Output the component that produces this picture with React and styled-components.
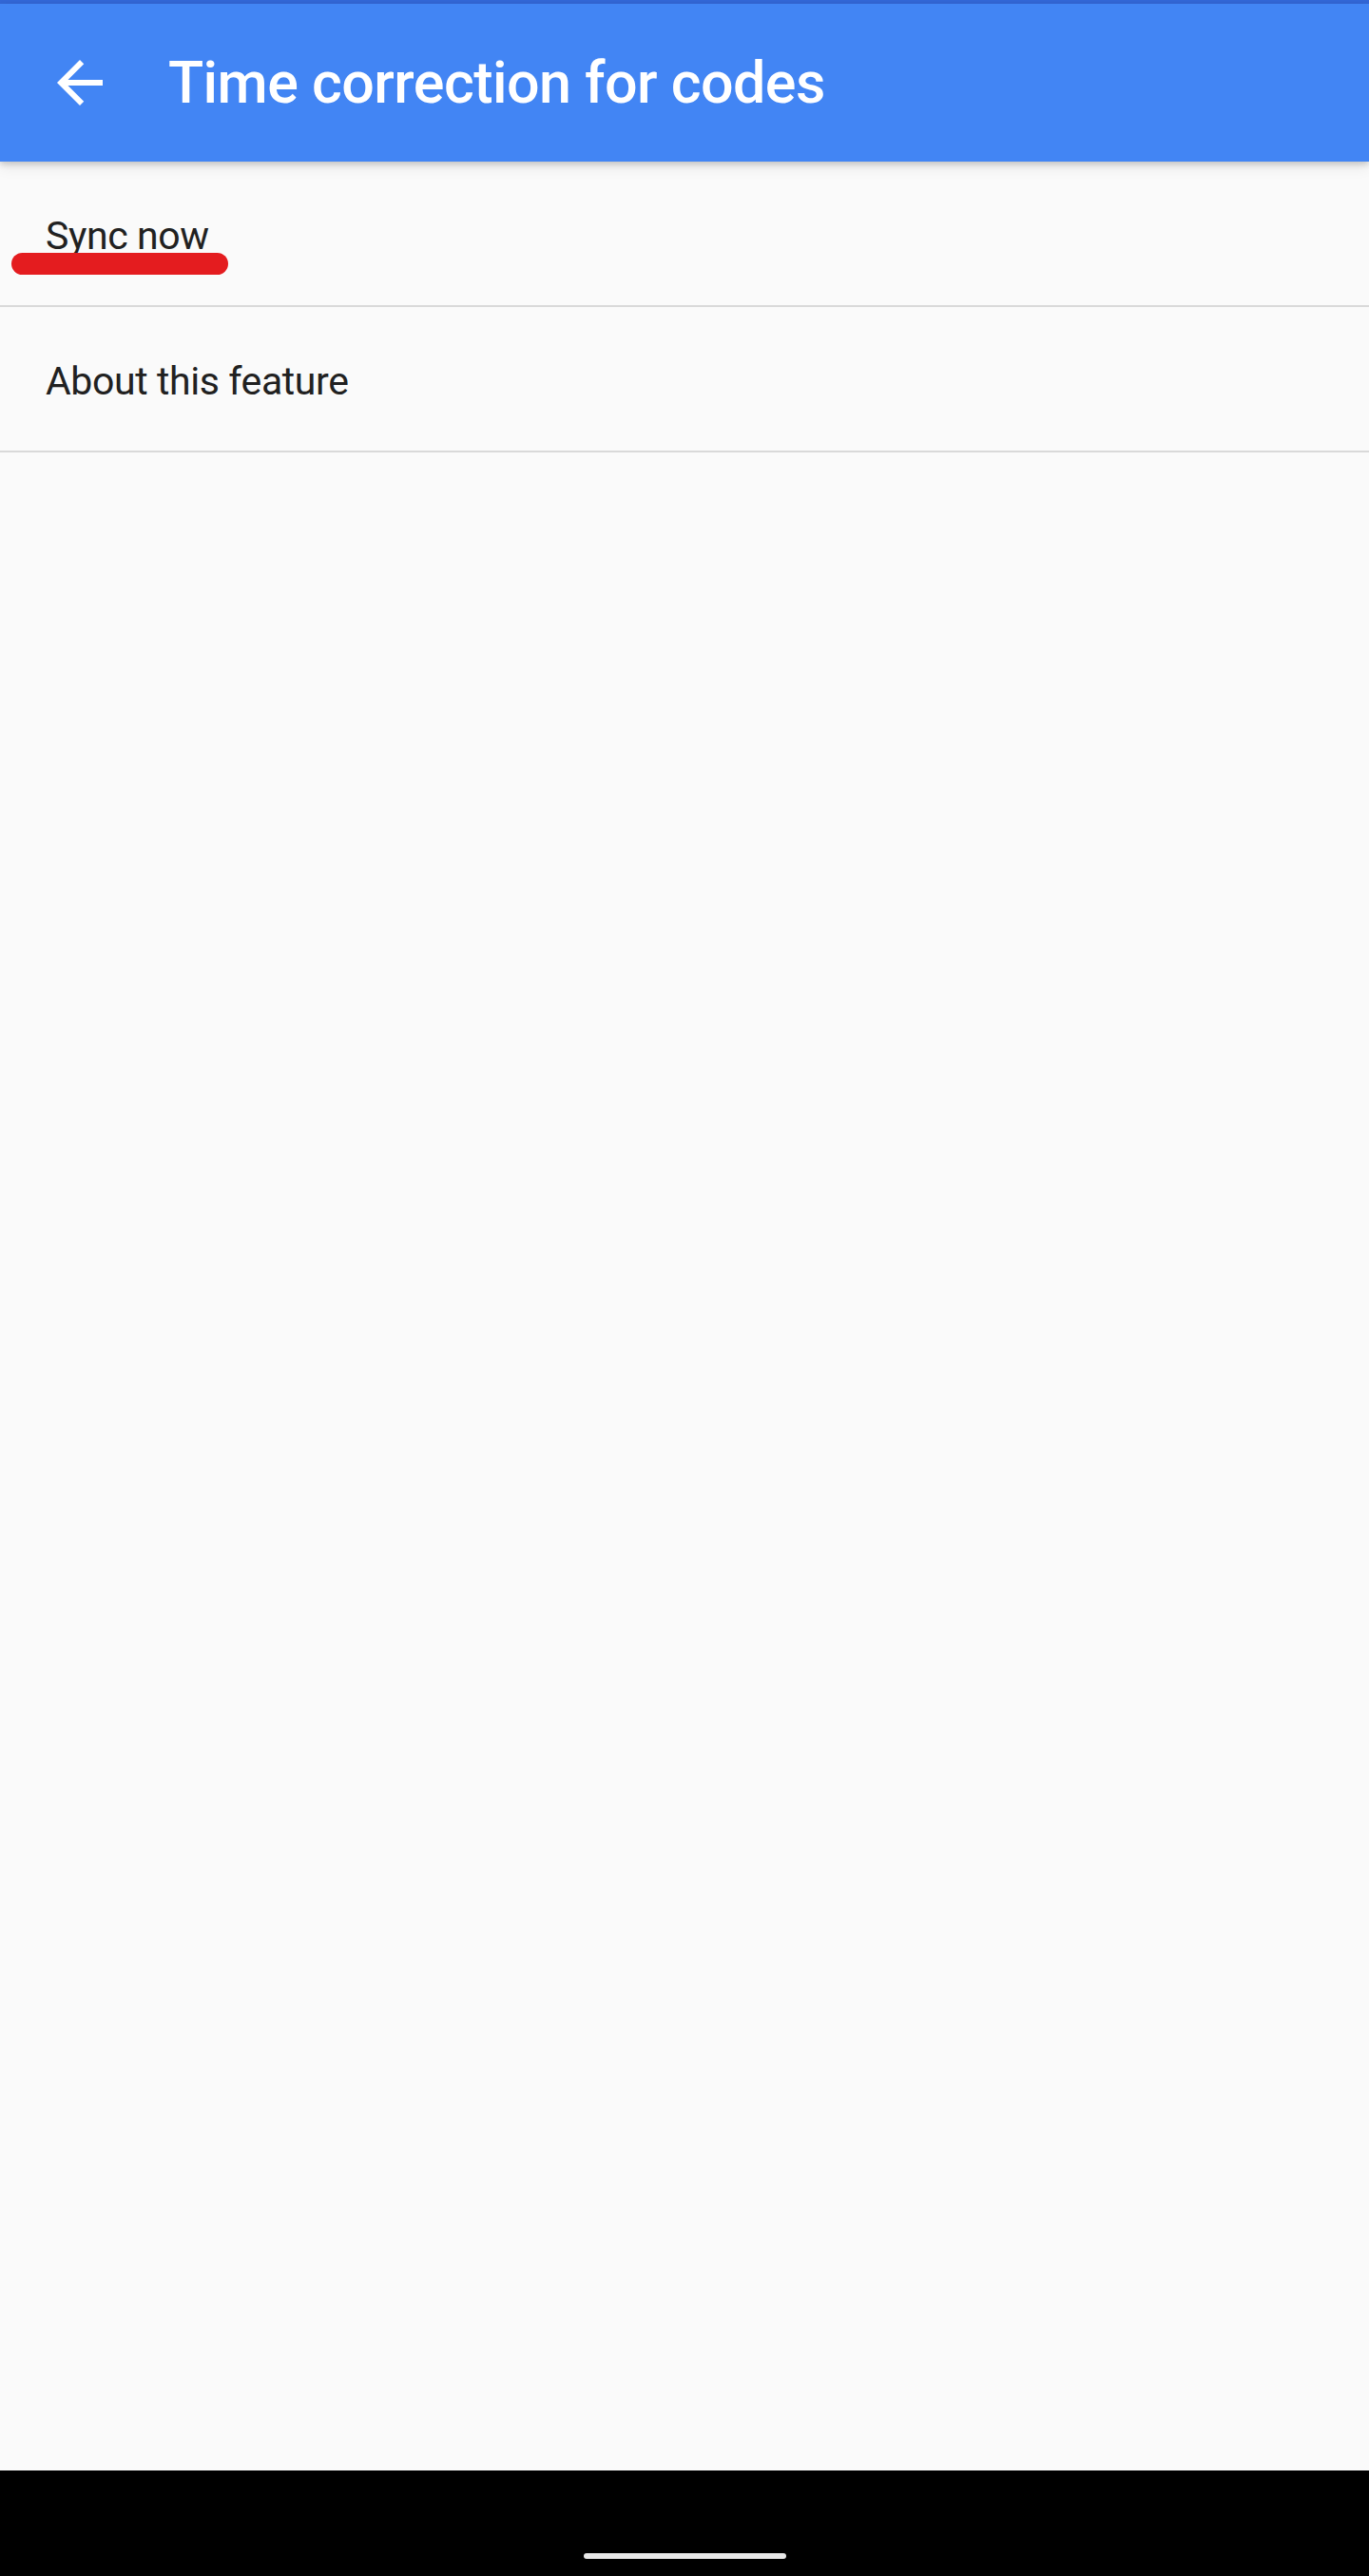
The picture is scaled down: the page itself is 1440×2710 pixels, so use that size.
import React from "react";
import styled, { createGlobalStyle } from "styled-components";

const Global = createGlobalStyle`
  html, body { margin: 0; padding: 0; background: #fafafa; }
  body { font-family: Roboto, "Noto Sans", "Liberation Sans", sans-serif; -webkit-font-smoothing: antialiased; }
`;

const Page = styled.div`
  min-height: 2710px;
  display: flex;
  flex-direction: column;
  background: #fafafa;
`;

const StatusStrip = styled.div`
  height: 4px;
  background: #3367d6;
`;

const AppBar = styled.header`
  position: relative;
  z-index: 2;
  height: 166px;
  background: #4285f4;
  display: flex;
  align-items: center;
  box-shadow: 0 3px 6px rgba(0, 0, 0, 0.16), 0 6px 14px rgba(0, 0, 0, 0.08);
`;

const BackButton = styled.button`
  width: 72px;
  height: 72px;
  margin-left: 48px;
  padding: 0;
  border: 0;
  background: transparent;
  display: flex;
  align-items: center;
  justify-content: center;
  color: #fff;
  svg { display: block; }
`;

const Title = styled.h1`
  margin: 0 0 0 57px;
  font-size: 61px;
  font-weight: 500;
  color: #ffffff;
  letter-spacing: -0.55px;
  line-height: 1;
`;

const List = styled.ul`
  list-style: none;
  margin: 0;
  padding: 0;
`;

const Row = styled.li`
  position: relative;
  height: 151px;
  border-bottom: 2px solid #d9d9d9;
  display: flex;
  align-items: center;
  padding-left: 48px;
  font-size: 41px;
  letter-spacing: -0.4px;
  color: #212121;
`;

const Label = styled.span`
  position: relative;
  top: 2px;
`;

const Highlight = styled.span`
  position: absolute;
  left: 12px;
  top: 96px;
  width: 228px;
  height: 23px;
  border-radius: 12px;
  background: #e41c1f;
`;

const Filler = styled.div`
  flex: 1;
`;

const NavBar = styled.div`
  height: 111px;
  background: #000;
  display: flex;
  align-items: flex-end;
  justify-content: center;
  padding-bottom: 18px;
  box-sizing: border-box;
`;

const HomeIndicator = styled.div`
  width: 213px;
  height: 6px;
  border-radius: 3px;
  background: #e8e8e8;
`;

function ArrowBack() {
  return (
    <svg width="72" height="72" viewBox="0 0 24 24" fill="currentColor" aria-hidden="true">
      <path d="M20 11H7.83l5.59-5.59L12 4l-8 8 8 8 1.41-1.41L7.83 13H20v-2z" />
    </svg>
  );
}

export default function App() {
  return (
    <>
      <Global />
      <Page>
        <StatusStrip />
        <AppBar>
          <BackButton aria-label="Back">
            <ArrowBack />
          </BackButton>
          <Title>Time correction for codes</Title>
        </AppBar>
        <List>
          <Row>
            <Label>Sync now</Label>
            <Highlight />
          </Row>
          <Row>
            <Label>About this feature</Label>
          </Row>
        </List>
        <Filler />
        <NavBar>
          <HomeIndicator />
        </NavBar>
      </Page>
    </>
  );
}
